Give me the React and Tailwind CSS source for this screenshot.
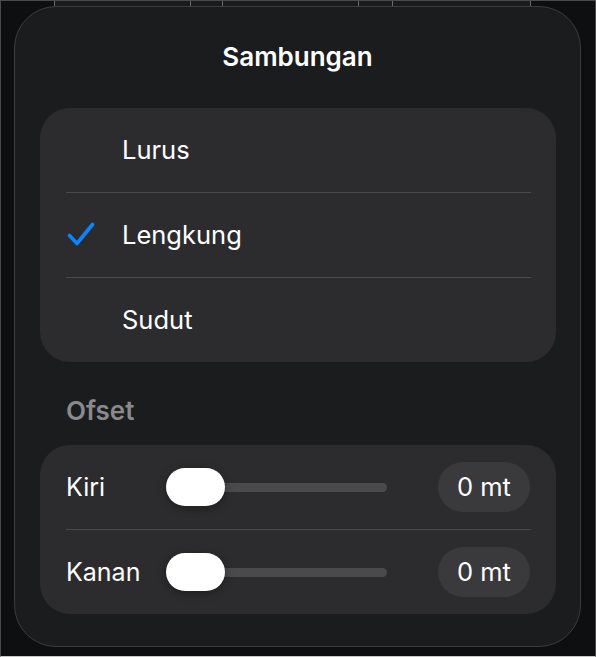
import React from "react";

const options = [
  { label: "Lurus", checked: false },
  { label: "Lengkung", checked: true },
  { label: "Sudut", checked: false }
];

const offsets = ["Kiri", "Kanan"];

const Check = () => (
  <svg width="28" height="26" viewBox="0 0 28 26" fill="none">
    <path
      d="M2.5 13.5 L10 21.5 L25.5 2.5"
      stroke="#0a84ff"
      strokeWidth="3.6"
      strokeLinecap="round"
      strokeLinejoin="round"
    />
  </svg>
);

const SliderRow = ({ label }) => (
  <div className="flex items-center h-[84px] pl-[26px] pr-[26px]">
    <span className="w-[100px] text-[25px] leading-8 text-white">{label}</span>
    <div className="relative w-[221px] h-[38px] flex items-center">
      <div className="w-full h-[9px] rounded-full bg-[#4a4a4d]" />
      {/* thumb sits over the track */}
      <div className="absolute left-0 top-0 w-[59px] h-[38px] rounded-full bg-white shadow-[0_2px_8px_rgba(0,0,0,0.35)]" />
    </div>
    <div className="ml-auto w-[92px] h-[50px] rounded-full bg-[#3a3a3d] flex items-center justify-center text-[25.5px] text-white">
      0 mt
    </div>
  </div>
);

export default function App() {
  return (
    <div
      className="w-[596px] h-[657px] overflow-hidden bg-[#0e0f10] border border-[#4a4a4a] border-b-[#c8c8c8]"
      style={{ fontFamily: "Inter, 'Noto Sans', sans-serif" }}
    >
      {/* background grid peeking above the popover */}
      <div className="flex h-[5px]">
        <div className="w-[53px]" />
        <div className="w-[137px] bg-[#1a1b1c] border-l border-r border-[#6b6b6b]" />
        <div className="w-[32px] bg-[#1a1b1c] border-r border-[#6b6b6b]" />
        <div className="w-[136px] bg-[#1a1b1c] border-r border-[#6b6b6b]" />
        <div className="w-[34px] bg-[#1a1b1c] border-r border-[#6b6b6b]" />
        <div className="w-[138px] bg-[#1a1b1c] border-r border-[#6b6b6b]" />
      </div>

      <div className="ml-[13px] w-[567px] h-[641px] rounded-[42px] border border-[#3b3c3e] bg-[#1b1c1d]">
        <h1 className="mt-[34px] h-8 text-center text-[26px] leading-8 font-semibold text-white">
          Sambungan
        </h1>

        <div className="mt-[35px] ml-[25px] w-[516px] rounded-[30px] bg-[#2c2c2e]">
          {options.map((opt, i) => (
            <div key={opt.label}>
              {i > 0 && <div className="ml-[26px] mr-[25px] h-px bg-[#4a4a4d]" />}
              <div className="flex items-center h-[84px]">
                <div className="w-[82px] pl-[27px] flex items-center">
                  {opt.checked && <Check />}
                </div>
                <span className="text-[25.5px] leading-8 text-white">{opt.label}</span>
              </div>
            </div>
          ))}
        </div>

        <div className="mt-[33px] ml-[51px] h-8 text-[26px] leading-8 font-semibold text-[#8a8a8e]">
          Ofset
        </div>

        <div className="mt-[18px] ml-[25px] w-[516px] rounded-[30px] bg-[#2c2c2e]">
          {offsets.map((label, i) => (
            <div key={label}>
              {i > 0 && <div className="ml-[26px] mr-[25px] h-px bg-[#4a4a4d]" />}
              <SliderRow label={label} />
            </div>
          ))}
        </div>
      </div>
    </div>
  );
}
